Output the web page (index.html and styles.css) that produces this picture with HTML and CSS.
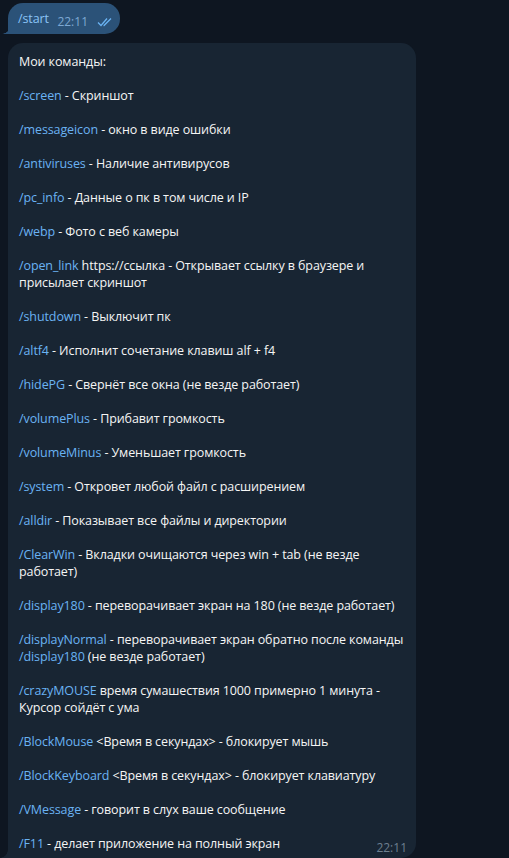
FILE: index.html
```html
<!DOCTYPE html>
<html lang="ru">
<head>
<meta charset="utf-8">
<link rel="stylesheet" href="styles.css">
</head>
<body>
<div class="chat">
  <div class="msg out">
    <span class="cmd">/start</span>
    <span class="meta">
      <span class="time">22:11</span>
      <svg class="checks" width="16" height="10" viewBox="0 0 16 10"><path d="M1 5.5 L4 8.5 L10 1.5 M6.5 8.5 L7 8.5 L14 1.5" fill="none" stroke="currentColor" stroke-width="1.3"/></svg>
    </span>
  </div>
  <div class="msg in">
    <p>Мои команды:</p>
    <p><span class="cmd">/screen</span> - Скриншот</p>
    <p><span class="cmd">/messageicon</span> - окно в виде ошибки</p>
    <p><span class="cmd">/antiviruses</span> - Наличие антивирусов</p>
    <p><span class="cmd">/pc_info</span> - Данные о пк в том числе и IP</p>
    <p><span class="cmd">/webp</span> - Фото с веб камеры</p>
    <p><span class="cmd">/open_link</span> https://ссылка - Открывает ссылку в браузере и присылает скриншот</p>
    <p><span class="cmd">/shutdown</span> - Выключит пк</p>
    <p><span class="cmd">/altf4</span> - Исполнит сочетание клавиш alf + f4</p>
    <p><span class="cmd">/hidePG</span> - Свернёт все окна (не везде работает)</p>
    <p><span class="cmd">/volumePlus</span> - Прибавит громкость</p>
    <p><span class="cmd">/volumeMinus</span> - Уменьшает громкость</p>
    <p><span class="cmd">/system</span> - Откровет любой файл с расширением</p>
    <p><span class="cmd">/alldir</span> - Показывает все файлы и директории</p>
    <p><span class="cmd">/ClearWin</span> - Вкладки очищаются через win + tab (не везде работает)</p>
    <p><span class="cmd">/display180</span> - переворачивает экран на 180 (не везде работает)</p>
    <p><span class="cmd">/displayNormal</span> - переворачивает экран обратно после команды <span class="cmd">/display180</span> (не везде работает)</p>
    <p><span class="cmd">/crazyMOUSE</span> время сумашествия 1000 примерно 1 минута - Курсор сойдёт с ума</p>
    <p><span class="cmd">/BlockMouse</span> &lt;Время в секундах&gt; - блокирует мышь</p>
    <p><span class="cmd">/BlockKeyboard</span> &lt;Время в секундах&gt; - блокирует клавиатуру</p>
    <p><span class="cmd">/VMessage</span> - говорит в слух ваше сообщение</p>
    <p><span class="cmd">/F11</span> - делает приложение на полный экран</p>
    <span class="stamp">22:11</span>
  </div>
</div>
</body>
</html>
```

FILE: styles.css
```css
html, body {
  margin: 0;
  padding: 0;
  background: #0e1621;
  height: 100%;
  overflow: hidden;
}
body {
  font-family: "Open Sans", "Noto Sans", sans-serif;
  font-size: 12.5px;
  letter-spacing: -0.1px;
  line-height: 17px;
  color: #f5f5f5;
}
.chat {
  display: flex;
  flex-direction: column;
  align-items: flex-start;
  gap: 9px;
  padding: 3px 0 0 8px;
}
.msg {
  position: relative;
  box-sizing: border-box;
}
.msg.out {
  background: #2b5278;
  border-radius: 15px 15px 15px 0;
  height: 31px;
  width: 112px;
  padding: 7px 7px 0 10px;
  display: flex;
  align-items: flex-start;
}
.msg.out::before {
  content: "";
  position: absolute;
  left: -6px;
  bottom: 0;
  width: 8px;
  height: 8px;
  background: radial-gradient(circle at 0 0, transparent 7.5px, #2b5278 8px);
}
.msg.out .cmd {
  color: #8ac4f6;
}
.meta {
  display: flex;
  align-items: center;
  gap: 9px;
  margin-left: auto;
  margin-top: 5px;
  color: #7da8d3;
  font-size: 12px;
  line-height: 14px;
  letter-spacing: 0;
}
.checks {
  color: #6ab3f3;
  display: block;
}
.msg.in {
  background: #182533;
  width: 408px;
  height: 815px;
  border-radius: 15px 15px 15px 0;
  padding: 10px 11px 6px 11px;
}
.msg.in::before {
  content: "";
  position: absolute;
  left: -8px;
  bottom: 0;
  width: 8px;
  height: 8px;
  background: radial-gradient(circle at 0 0, transparent 7.5px, #182533 8px);
}
.msg.in p {
  margin: 0 0 17px 0;
}
.msg.in p:last-of-type {
  margin-bottom: 0;
}
.cmd {
  color: #6ab3f3;
}
.stamp {
  position: absolute;
  right: 9px;
  bottom: 3px;
  font-size: 12px;
  line-height: 14px;
  letter-spacing: 0;
  color: #6d7f8f;
}
```
